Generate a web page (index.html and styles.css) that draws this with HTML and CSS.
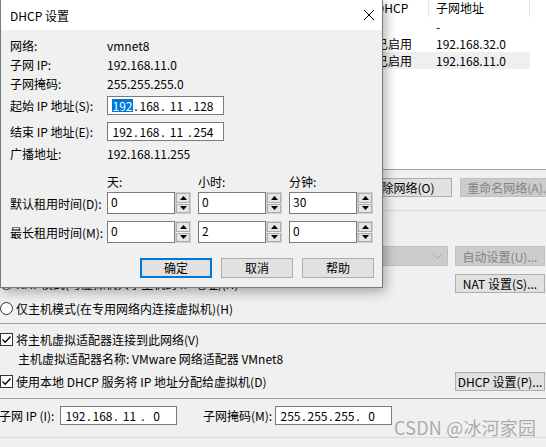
FILE: index.html
```html
<!DOCTYPE html>
<html lang="zh-CN">
<head>
<meta charset="utf-8">
<title>DHCP 设置</title>
<link rel="stylesheet" href="styles.css">
</head>
<body>
<div class="app">
  <div class="netlist">
    <div class="lv-row lv-head">
      <div class="c"></div><div class="c"></div><div class="c"></div><div class="c"></div><div class="c">DHCP</div><div class="c">子网地址</div>
    </div>
    <div class="lv-row">
      <div class="c"></div><div class="c"></div><div class="c"></div><div class="c"></div><div class="c"></div><div class="c">-</div>
    </div>
    <div class="lv-row">
      <div class="c"></div><div class="c"></div><div class="c"></div><div class="c"></div><div class="c">已启用</div><div class="c">192.168.32.0</div>
    </div>
    <div class="lv-row sel">
      <div class="c"></div><div class="c"></div><div class="c"></div><div class="c"></div><div class="c">已启用</div><div class="c">192.168.11.0</div>
    </div>
  </div>

  <div class="tools">
    <div class="btn"></div>
    <div class="btn">移除网络(O)</div>
    <div class="btn dis">重命名网络(A)...</div>
  </div>

  <div class="sep light s1"></div>

  <div class="opt r-bridge"><span class="radio"></span></div>
  <div class="opt r-combo">
    <span class="sub-lbl"></span>
    <div class="combo"><span></span>
      <svg class="chev" width="9" height="5" viewBox="0 0 9 5"><path d="M0.5 0.5 L4.5 4.5 L8.5 0.5" fill="none" stroke="#a6a6a6" stroke-width="1"/></svg>
    </div>
    <div class="btn dis side">自动设置(U)...</div>
  </div>
  <div class="opt r-nat"><span class="radio"></span><span>NAT 模式(与虚拟机共享主机的 IP 地址)(N)</span><div class="btn side">NAT 设置(S)...</div></div>
  <div class="opt r-host"><span class="radio"></span><span>仅主机模式(在专用网络内连接虚拟机)(H)</span></div>

  <div class="sep s2"></div>

  <div class="opt r-conn"><span class="check"><svg width="11" height="11" viewBox="0 0 11 11"><path d="M1.5 5.5 L4.2 8.2 L9.5 2.5" fill="none" stroke="#000" stroke-width="1.3"/></svg></span><span>将主机虚拟适配器连接到此网络(V)</span></div>
  <div class="opt r-name">主机虚拟适配器名称: VMware 网络适配器 VMnet8</div>
  <div class="opt r-dhcp"><span class="check"><svg width="11" height="11" viewBox="0 0 11 11"><path d="M1.5 5.5 L4.2 8.2 L9.5 2.5" fill="none" stroke="#000" stroke-width="1.3"/></svg></span><span>使用本地 DHCP 服务将 IP 地址分配给虚拟机(D)</span><div class="btn side">DHCP 设置(P)...</div></div>

  <div class="sep s3"></div>

  <div class="opt r-subnet">
    <span class="sn-lbl">子网 IP (I):</span>
    <div class="ipbox"><span class="oct">192</span><span class="dot">.</span><span class="oct">168</span><span class="dot">.</span><span class="oct">11</span><span class="dot">.</span><span class="oct">0</span></div>
    <span class="mask-lbl">子网掩码(M):</span>
    <div class="ipbox"><span class="oct">255</span><span class="dot">.</span><span class="oct">255</span><span class="dot">.</span><span class="oct">255</span><span class="dot">.</span><span class="oct">0</span></div>
  </div>

  <div class="sep light s4"></div>

  <div class="watermark">CSDN @冰河家园</div>

  <div class="dlg">
    <div class="dlg-title">
      <span>DHCP 设置</span>
      <svg class="close" width="10" height="10" viewBox="0 0 10 10"><path d="M0 0 L10 10 M10 0 L0 10" stroke="#000" stroke-width="1"/></svg>
    </div>
    <div class="dlg-body">
      <div class="f-row"><span class="lbl">网络:</span><span>vmnet8</span></div>
      <div class="f-row"><span class="lbl">子网 IP:</span><span>192.168.11.0</span></div>
      <div class="f-row"><span class="lbl">子网掩码:</span><span>255.255.255.0</span></div>
      <div class="f-row r-ip1"><span class="lbl">起始 IP 地址(S):</span>
        <div class="ipbox"><span class="oct"><span class="hl">192</span></span><span class="dot">.</span><span class="oct">168</span><span class="dot">.</span><span class="oct">11</span><span class="dot">.</span><span class="oct">128</span></div>
      </div>
      <div class="f-row r-ip2"><span class="lbl">结束 IP 地址(E):</span>
        <div class="ipbox"><span class="oct">192</span><span class="dot">.</span><span class="oct">168</span><span class="dot">.</span><span class="oct">11</span><span class="dot">.</span><span class="oct">254</span></div>
      </div>
      <div class="f-row r-bc"><span class="lbl">广播地址:</span><span>192.168.11.255</span></div>
      <div class="f-row r-heads"><span class="lbl"></span>
        <div class="spins"><span>天:</span><span>小时:</span><span>分钟:</span></div>
      </div>
      <div class="f-row r-sp1"><span class="lbl">默认租用时间(D):</span>
        <div class="spins">
          <div class="spin"><div class="spin-val">0</div><div class="spin-btns"><span class="sb"><svg width="7" height="4" viewBox="0 0 7 4"><path d="M0 4 L3.5 0 L7 4 Z" fill="#000"/></svg></span><span class="sb"><svg width="7" height="4" viewBox="0 0 7 4"><path d="M0 0 L7 0 L3.5 4 Z" fill="#000"/></svg></span></div></div>
          <div class="spin"><div class="spin-val">0</div><div class="spin-btns"><span class="sb"><svg width="7" height="4" viewBox="0 0 7 4"><path d="M0 4 L3.5 0 L7 4 Z" fill="#000"/></svg></span><span class="sb"><svg width="7" height="4" viewBox="0 0 7 4"><path d="M0 0 L7 0 L3.5 4 Z" fill="#000"/></svg></span></div></div>
          <div class="spin"><div class="spin-val">30</div><div class="spin-btns"><span class="sb"><svg width="7" height="4" viewBox="0 0 7 4"><path d="M0 4 L3.5 0 L7 4 Z" fill="#000"/></svg></span><span class="sb"><svg width="7" height="4" viewBox="0 0 7 4"><path d="M0 0 L7 0 L3.5 4 Z" fill="#000"/></svg></span></div></div>
        </div>
      </div>
      <div class="f-row r-sp2"><span class="lbl">最长租用时间(M):</span>
        <div class="spins">
          <div class="spin"><div class="spin-val">0</div><div class="spin-btns"><span class="sb"><svg width="7" height="4" viewBox="0 0 7 4"><path d="M0 4 L3.5 0 L7 4 Z" fill="#000"/></svg></span><span class="sb"><svg width="7" height="4" viewBox="0 0 7 4"><path d="M0 0 L7 0 L3.5 4 Z" fill="#000"/></svg></span></div></div>
          <div class="spin"><div class="spin-val">2</div><div class="spin-btns"><span class="sb"><svg width="7" height="4" viewBox="0 0 7 4"><path d="M0 4 L3.5 0 L7 4 Z" fill="#000"/></svg></span><span class="sb"><svg width="7" height="4" viewBox="0 0 7 4"><path d="M0 0 L7 0 L3.5 4 Z" fill="#000"/></svg></span></div></div>
          <div class="spin"><div class="spin-val">0</div><div class="spin-btns"><span class="sb"><svg width="7" height="4" viewBox="0 0 7 4"><path d="M0 4 L3.5 0 L7 4 Z" fill="#000"/></svg></span><span class="sb"><svg width="7" height="4" viewBox="0 0 7 4"><path d="M0 0 L7 0 L3.5 4 Z" fill="#000"/></svg></span></div></div>
        </div>
      </div>
      <div class="dlg-btns">
        <div class="dbtn focus">确定</div>
        <div class="dbtn">取消</div>
        <div class="dbtn">帮助</div>
      </div>
    </div>
  </div>
</div>
</body>
</html>
```

FILE: styles.css
```css
* { box-sizing: border-box; }
html, body { margin: 0; padding: 0; }
body {
  width: 546px;
  height: 447px;
  overflow: hidden;
  background: #f0f0f0;
  font-family: "Noto Sans CJK SC", "Noto Sans", sans-serif;
  font-size: 12px;
  color: #000;
}
.app { position: relative; width: 546px; height: 447px; overflow: hidden; }

/* network list */
.netlist { height: 170px; background: #fff; border-bottom: 1px solid #a0a0a0; }
.lv-row {
  display: grid;
  grid-template-columns: 70px 100px 115px 84px 60px 101px;
  width: 530px;
  height: 17px;
  line-height: 17px;
  white-space: nowrap;
}
.lv-head { height: 18px; line-height: 16px; }
.lv-head .c { border-right: 1px solid #e5e5e5; height: 17px; }
.c { padding-left: 7px; overflow: hidden; }
.lv-row.sel { background: #efefef; }

/* buttons */
.btn {
  flex: none;
  height: 19px;
  border: 1px solid #adadad;
  background: #e1e1e1;
  display: flex;
  align-items: center;
  justify-content: center;
  white-space: nowrap;
  line-height: 17px;
}
.btn.dis { background: #cccccc; border-color: #bfbfbf; color: #838383; }
.tools { display: flex; gap: 8px; padding-left: 244px; margin-top: 8px; white-space: nowrap; }
.tools .btn { width: 100px; }

.sep { height: 1px; background: #a0a0a0; }
.sep.light { background: #dadada; }
.s1 { margin-top: 13px; }
.s2 { margin-top: 6px; }
.s3 { margin-top: 7px; }
.s4 { margin-top: 12px; }

/* options */
.opt { display: flex; align-items: center; white-space: nowrap; line-height: 17px; }
.side { width: 90px; height: 19px; margin-left: auto; margin-right: 1px; }
.radio {
  flex: none;
  width: 13px; height: 13px;
  border: 1px solid #333;
  border-radius: 50%;
  background: #fff;
  margin-right: 3px;
}
.check {
  flex: none;
  width: 13px; height: 13px;
  border: 1px solid #333;
  background: #fff;
  margin-right: 3px;
  display: flex;
  align-items: center;
  justify-content: center;
}
.check svg { display: block; }
.r-bridge { margin-top: 11px; height: 19px; }
.r-combo { margin-top: 5px; height: 20px; }
.sub-lbl { padding-left: 16px; width: 96px; flex: none; }
.combo {
  flex: none;
  width: 352px;
  height: 20px;
  border: 1px solid #bfbfbf;
  background: #cccccc;
  color: #838383;
  display: flex;
  align-items: center;
  justify-content: space-between;
  padding: 0 5px 0 4px;
}
.chev { display: block; }
.r-combo .side { height: 20px; }
.r-nat { margin-top: 8px; height: 19px; }
.r-host { margin-top: 7px; height: 17px; }
.r-conn { margin-top: 6px; height: 18px; }
.r-name { margin-top: 1px; height: 18px; padding-left: 18px; }
.r-dhcp { margin-top: 5px; height: 19px; }
.r-subnet { margin-top: 7px; height: 19px; }
.sn-lbl { margin-left: -1px; width: 61px; flex: none; }
.mask-lbl { margin-left: 26px; width: 72px; flex: none; }

.ipbox {
  flex: none;
  width: 117px;
  height: 19px;
  border: 1px solid #7a7a7a;
  background: #fff;
  display: flex;
  padding-left: 3px;
  line-height: 17px;
}
.oct { width: 23px; text-align: center; flex: none; }
.dot { width: 4px; text-align: center; flex: none; }
.hl { display: inline-block; background: #0078d7; color: #fff; line-height: 13px; padding: 0 1px; }

.watermark {
  position: absolute;
  left: 394px;
  top: 416px;
  font-size: 18px;
  line-height: 22px;
  color: rgba(110, 110, 110, 0.55);
  letter-spacing: 0.2px;
  white-space: nowrap;
}

/* dialog */
.dlg {
  position: absolute;
  left: 0;
  top: 0;
  width: 383px;
  height: 288px;
  border: 1px solid #7a7a7a;
  border-top: none;
  background: #f0f0f0;
  box-shadow: 2px 3px 12px rgba(0, 0, 0, 0.35);
  display: flex;
  flex-direction: column;
}
.dlg-title {
  height: 30px;
  background: #fff;
  display: flex;
  align-items: center;
  justify-content: space-between;
  padding: 0 8px 0 9px;
  flex: none;
}
.close { display: block; }
.dlg-body { padding: 6px 8px 0 9px; }
.f-row { display: flex; align-items: center; height: 19px; white-space: nowrap; }
.lbl { width: 97px; flex: none; }
.r-ip1 { margin-top: 3px; }
.r-ip2 { margin-top: 7px; }
.r-bc { margin-top: 3px; }
.r-heads { margin-top: 9px; }
.r-sp1 { margin-top: 1px; height: 22px; }
.r-sp2 { margin-top: 7px; height: 22px; }
.spins { display: grid; grid-template-columns: 84px 84px 84px; column-gap: 7px; }
.spin { display: flex; height: 22px; }
.spin-val {
  width: 68px;
  border: 1px solid #7a7a7a;
  background: #fff;
  padding: 1px 0 0 3px;
  line-height: 16px;
}
.spin-btns {
  width: 16px;
  border: 1px solid #d0d0d0;
  display: flex;
  flex-direction: column;
  gap: 1px;
}
.sb {
  flex: 1;
  border: 1px solid #adadad;
  background: #e5e5e5;
  display: flex;
  align-items: center;
  justify-content: center;
}
.sb svg { display: block; }
.dlg-btns { display: flex; justify-content: flex-end; gap: 9px; margin-top: 15px; }
.dbtn {
  width: 72px;
  height: 20px;
  border: 1px solid #adadad;
  background: #e1e1e1;
  display: flex;
  align-items: center;
  justify-content: center;
  line-height: 16px;
}
.dbtn.focus { border: 2px solid #0078d7; }
```
